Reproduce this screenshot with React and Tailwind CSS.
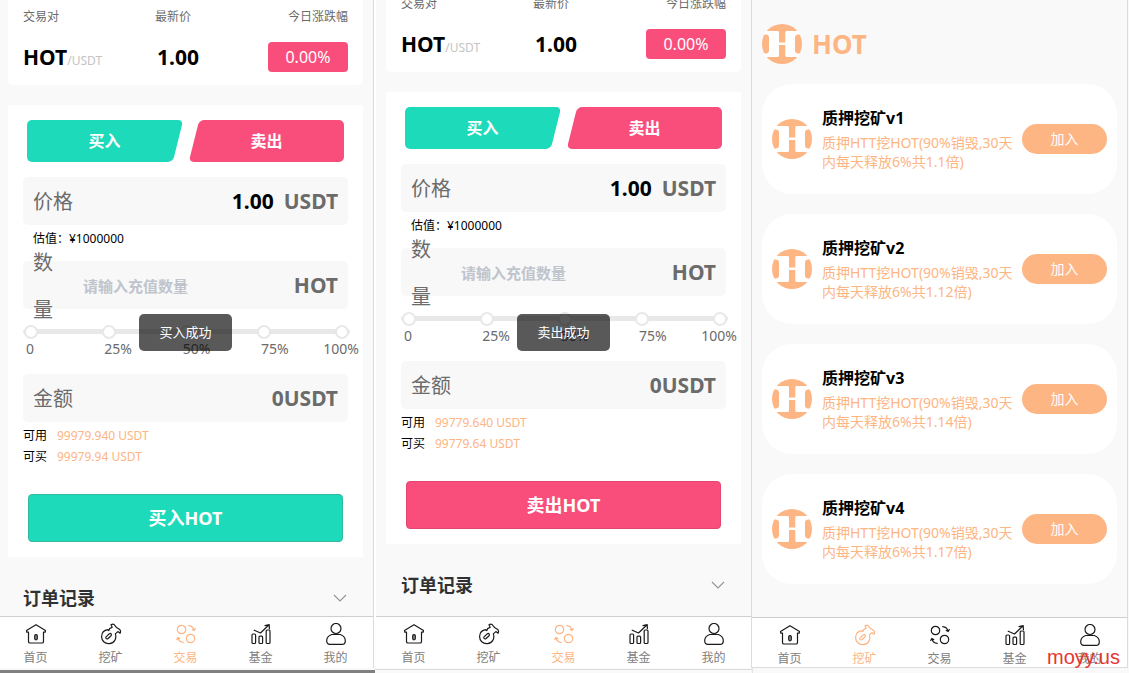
import React from "react";

const NAV = [
  { id: "home", label: "首页" },
  { id: "mine", label: "挖矿" },
  { id: "trade", label: "交易" },
  { id: "fund", label: "基金" },
  { id: "me", label: "我的" },
];

function NavIcon({ id }) {
  return (
    <svg
      viewBox="0 0 22 22"
      className="h-[22px] w-[22px]"
      fill="none"
      stroke="currentColor"
      strokeWidth="1.2"
      strokeLinecap="round"
      strokeLinejoin="round"
      aria-hidden="true"
    >
      {id === "home" && (
        <>
          <path d="M3.5 9.2H1.8L1.5 7.4 11 1.7l9.5 5.7-.3 1.8h-1.7v9.2c0 1-.6 1.6-1.6 1.6H5.1c-1 0-1.6-.6-1.6-1.6z" />
          <rect x="9.7" y="11.6" width="2.6" height="5.2" rx="1.2" fill="currentColor" fillOpacity=".45" />
        </>
      )}
      {id === "mine" && (
        <>
          <path d="M9.6 5.6 12.200 4.200 11 1.800c1.600-1 3.200-.5 4.200 1l1.300 1.600 2.900 1.800c1.200 1 1.300 2.700.7 4l-2.200-1.600-2.600 2.300c1.700 4.600-1 9.300-5.900 9.700C4.800 21 1.500 17.700 1.600 13.500 1.700 9.600 4.300 7 8 6.600c.2 1.400 1 1.500 1.600-1z" />
          <path d="M6.300 15.600c-.8-.6-.7-1.300 0-2l2.900-2.700c.8-.6 1.500-.5 2 .1.500.7.300 1.300-.4 2l-2.700 2.500c-.7.500-1.300.5-1.800.1z" />
        </>
      )}
      {id === "trade" && (
        <>
          <circle cx="6.500" cy="6.500" r="4.200" />
          <circle cx="15.500" cy="15.500" r="4.200" />
          <path d="M13.800 2.600c2.800.3 4.700 2 5.400 4.800M20.300 5.500l-1.100 2-1.900-1.100M8.200 19.400c-2.800-.3-4.700-2-5.400-4.800M1.700 16.500l1.100-2 1.900 1.100" />
        </>
      )}
      {id === "fund" && (
        <>
          <rect x="2" y="11" width="3.600" height="9.500" rx="1" />
          <rect x="9" y="13.200" width="3.600" height="7.300" rx="1" />
          <rect x="16.200" y="7" width="3.800" height="13.500" rx="1" />
          <path d="M4.200 7.200 10.500 10l8-7.800M15 2.600l4.200-1 .2 4" />
        </>
      )}
      {id === "me" && (
        <>
          <circle cx="11" cy="5.500" r="5" />
          <path d="M6.600 11.500h8.800c2.800 1 4.900 3.300 4.900 6.200 0 2.200-1.100 3.700-3.200 3.700H4.900c-2.100 0-3.200-1.500-3.200-3.700 0-2.900 2.100-5.200 4.900-6.200z" />
        </>
      )}
    </svg>
  );
}

function NavBar({ active }) {
  return (
    <nav className="grid shrink-0 grid-cols-5 border-t border-[#cfcfcf] bg-white pt-1.5">
      {NAV.map((item) => (
        <a
          key={item.id}
          href={"#" + item.id}
          className={
            "flex flex-col items-center gap-[5px] text-xs leading-4 " +
            (item.id === active ? "text-[#fdb583]" : "text-[#808080]")
          }
        >
          <span className={item.id === active ? "text-[#fdb583]" : "text-[#1a1a1a]"}>
            <NavIcon id={item.id} />
          </span>
          <span>{item.label}</span>
        </a>
      ))}
    </nav>
  );
}

function Logo() {
  return (
    <svg viewBox="0 0 40 40" className="h-10 w-10 shrink-0" aria-hidden="true">
      <circle cx="20" cy="20" r="20" fill="#fdb583" />
      <path
        fill="#fff"
        d="M3.500 7H15.300c1.200 0 1.700.6 1.700 1.800v9.700h6.300V8.800c0-1.200.5-1.800 1.700-1.800h11.500l2 3.200c-3.800.2-5.500 1-5.500 3.300v13c0 2.300 1.700 3.100 5.500 3.300l-2 3.200H25c-1.200 0-1.700-.6-1.700-1.800V21H17v10.200c0 1.200-.5 1.800-1.700 1.800H3.500l-2-3.200c3.800-.2 5.500-1 5.500-3.300v-13c0-2.300-1.700-3.100-5.500-3.300z"
      />
    </svg>
  );
}

function Tabs() {
  return (
    <div className="flex gap-[7px] px-1 text-base font-bold text-white">
      <button
        type="button"
        className="relative isolate h-[42px] flex-1 before:absolute before:inset-y-0 before:left-0 before:right-4 before:-z-10 before:rounded-[5px] before:bg-[#1cdaba] after:absolute after:inset-y-0 after:left-1/2 after:right-[5px] after:-z-10 after:-skew-x-[14deg] after:rounded-[5px] after:bg-[#1cdaba]"
      >
        买入
      </button>
      <button
        type="button"
        className="relative isolate h-[42px] flex-1 before:absolute before:inset-y-0 before:left-4 before:right-0 before:-z-10 before:rounded-[5px] before:bg-[#f94e7c] after:absolute after:inset-y-0 after:left-[5px] after:right-1/2 after:-z-10 after:-skew-x-[14deg] after:rounded-[5px] after:bg-[#f94e7c]"
      >
        卖出
      </button>
    </div>
  );
}

const BOX = "flex h-12 items-center rounded-[5px] bg-[#f8f8f8] px-2.5 pt-0.5 text-[21px] font-bold text-[#6b6b6b]";

function TradeScreen({ id, side, scrolled, available, tradable, toast }) {
  const buy = side === "买入";
  return (
    <section className="relative flex min-w-0 flex-1 flex-col">
      <div className="flex-1 overflow-hidden px-2.5">
        <div className={scrolled ? "-mt-[13px]" : ""}>
          <div className="rounded-b-[5px] bg-white px-[15px] pb-[13px]">
            <div className="grid grid-cols-[132px_1fr_auto] items-center">
              <span className="h-[42px] text-xs leading-[34px] text-[#6b6b6b]">交易对</span>
              <span className="h-[42px] text-xs leading-[34px] text-[#6b6b6b]">最新价</span>
              <span className="h-[42px] text-right text-xs leading-[34px] text-[#6b6b6b]">今日涨跌幅</span>
              <span className="text-xs text-[#c4c4c4]">
                <b className="text-[21px] leading-[30px] text-black">HOT</b>/USDT
              </span>
              <b className="pl-0.5 text-[21px] leading-[30px]">1.00</b>
              <span className="w-20 justify-self-end rounded bg-[#f94e7c] text-center text-base leading-[30px] text-white">
                0.00%
              </span>
            </div>
          </div>

          <form className="mt-5 bg-white p-[15px]" onSubmit={(e) => e.preventDefault()}>
            <Tabs />
            <div className={BOX + " mt-[15px]"}>
              <label htmlFor={id + "-price"} className="text-xl font-normal">
                价格
              </label>
              <input
                id={id + "-price"}
                defaultValue="1.00"
                className="min-w-0 flex-1 bg-transparent pr-2.5 text-right text-black outline-none"
              />
              <span>USDT</span>
            </div>
            <p className="mb-2 px-2.5 text-xs leading-7">估值：¥1000000</p>
            <div className={BOX}>
              <label htmlFor={id + "-amount"} className="w-[30px] text-xl leading-[47px] font-normal">
                数 量
              </label>
              <input
                id={id + "-amount"}
                placeholder="请输入充值数量"
                className="ml-5 min-w-0 flex-1 bg-transparent text-[15px] font-bold outline-none placeholder:text-[#c0c4cc]"
              />
              <span>HOT</span>
            </div>
            <div className="relative pt-5 pb-[15px]">
              <div className="-mr-0.5 flex h-[5px] items-center justify-between rounded-sm bg-[#e8e8e8] px-px">
                {[0, 1, 2, 3, 4].map((n) => (
                  <span key={n} className="h-3.5 w-3.5 rounded-full border-2 border-[#e8e8e8] bg-white" />
                ))}
              </div>
              <div className="-mr-[11px] mt-[5px] flex pl-[3px] text-sm leading-5 text-[#6b6b6b]">
                <span className="flex-1">0</span>
                <span className="flex-1">25%</span>
                <span className="flex-1">50%</span>
                <span className="flex-1">75%</span>
                <span className="-ml-4">100%</span>
              </div>
              <input
                type="range"
                min="0"
                max="100"
                step="25"
                defaultValue="0"
                aria-label="数量百分比"
                className="absolute inset-x-0 top-3 h-5 w-full opacity-0"
              />
            </div>
            <div className={BOX + " justify-between"}>
              <span className="text-xl font-normal">金额</span>
              <span>0USDT</span>
            </div>
            <dl className="mt-[3px] grid grid-cols-[34px_1fr] text-xs leading-[21px]">
              <dt>可用</dt>
              <dd className="text-[#fdb583]">{available} USDT</dd>
              <dt>可买</dt>
              <dd className="text-[#fdb583]">{tradable} USDT</dd>
            </dl>
            <div className="mt-[27px] px-[5px]">
              <button
                type="submit"
                className={
                  "h-12 w-full rounded border text-lg font-bold text-white " +
                  (buy ? "border-[#2fb9a0] bg-[#1cdaba]" : "border-[#e5466f] bg-[#f94e7c]")
                }
              >
                {side}HOT
              </button>
            </div>
          </form>

          <div className="flex items-center justify-between px-[15px] pt-[30px]">
            <h2 className="text-lg leading-[22px] font-bold text-[#303133]">订单记录</h2>
            <svg viewBox="0 0 16 16" className="h-4 w-4" fill="none" stroke="#909399" strokeWidth="1.100" aria-hidden="true">
              <path d="M2 5 8 11l6-6" />
            </svg>
          </div>
        </div>
      </div>
      <NavBar active="trade" />
      <div
        role="status"
        className="absolute inset-x-0 top-0 bottom-0.5 m-auto h-[37px] w-fit rounded-[5px] bg-black/65 px-5 text-[13px] leading-[37px] whitespace-nowrap text-white"
      >
        {toast}
      </div>
    </section>
  );
}

const POOLS = [
  { name: "质押挖矿v1", rate: "1.1" },
  { name: "质押挖矿v2", rate: "1.12" },
  { name: "质押挖矿v3", rate: "1.14" },
  { name: "质押挖矿v4", rate: "1.17" },
];

function MiningScreen() {
  return (
    <section className="flex min-w-0 flex-1 flex-col">
      <div className="flex-1 px-2.5 pt-6">
        <h1 className="flex items-center gap-2.5 text-[26px] leading-10 font-bold text-[#fdb583]">
          <Logo />
          HOT
        </h1>
        <ul className="mt-5 flex flex-col gap-5">
          {POOLS.map((pool) => (
            <li key={pool.name} className="flex h-[110px] items-center rounded-[30px] bg-white px-2.5">
              <Logo />
              <div className="min-w-0 flex-1 pb-px pl-2.5">
                <h3 className="mb-[3px] text-base leading-6 font-bold">{pool.name}</h3>
                <p className="text-sm leading-[19px] whitespace-nowrap text-[#fdb583]">
                  质押HTT挖HOT(90%销毁,30天
                  <br />
                  内每天释放6%共{pool.rate}倍)
                </p>
              </div>
              <button
                type="button"
                className="h-[30px] w-[85px] shrink-0 rounded-full bg-[#fdb583] text-sm text-white"
              >
                加入
              </button>
            </li>
          ))}
        </ul>
      </div>
      <NavBar active="mine" />
    </section>
  );
}

export default function App() {
  return (
    <main className="flex min-h-screen flex-col bg-[#f9f9f9] font-['Noto_Sans','Noto_Sans_CJK_SC',sans-serif] text-black">
      <div className="grid flex-1 grid-cols-[374fr_378fr_377fr]">
        <div className="flex min-w-0 overflow-hidden border-r border-[#dcdcdc] bg-white pb-0.5">
          <div className="-ml-0.5 flex min-w-0 flex-1 bg-[#f9f9f9]">
            <TradeScreen
              id="buy"
              side="买入"
              available="99979.940"
              tradable="99979.94"
              toast="买入成功"
            />
          </div>
        </div>
        <div className="flex min-w-0 border-r border-[#dcdcdc] bg-white pb-0.5 pl-0.5">
          <div className="flex min-w-0 flex-1 bg-[#f9f9f9]">
            <TradeScreen
              id="sell"
              side="卖出"
              scrolled
              available="99779.640"
              tradable="99779.64"
              toast="卖出成功"
            />
          </div>
        </div>
        <div className="relative mr-px flex min-w-0 border-r border-b border-[#dcdcdc]">
          <MiningScreen />
          <span className="absolute right-[7px] bottom-0 font-['Liberation_Sans',sans-serif] text-xl leading-5 text-[#e8352e]">
            moyy.us
          </span>
        </div>
      </div>
      <div className="grid h-[5px] grid-cols-[375fr_377fr_377fr]">
        <div className="border-b-[3px] border-[#808080]" />
        <div className="mt-px border-t border-[#dcdcdc]" />
        <div className="border-l border-[#e4e4e4]" />
      </div>
    </main>
  );
}
